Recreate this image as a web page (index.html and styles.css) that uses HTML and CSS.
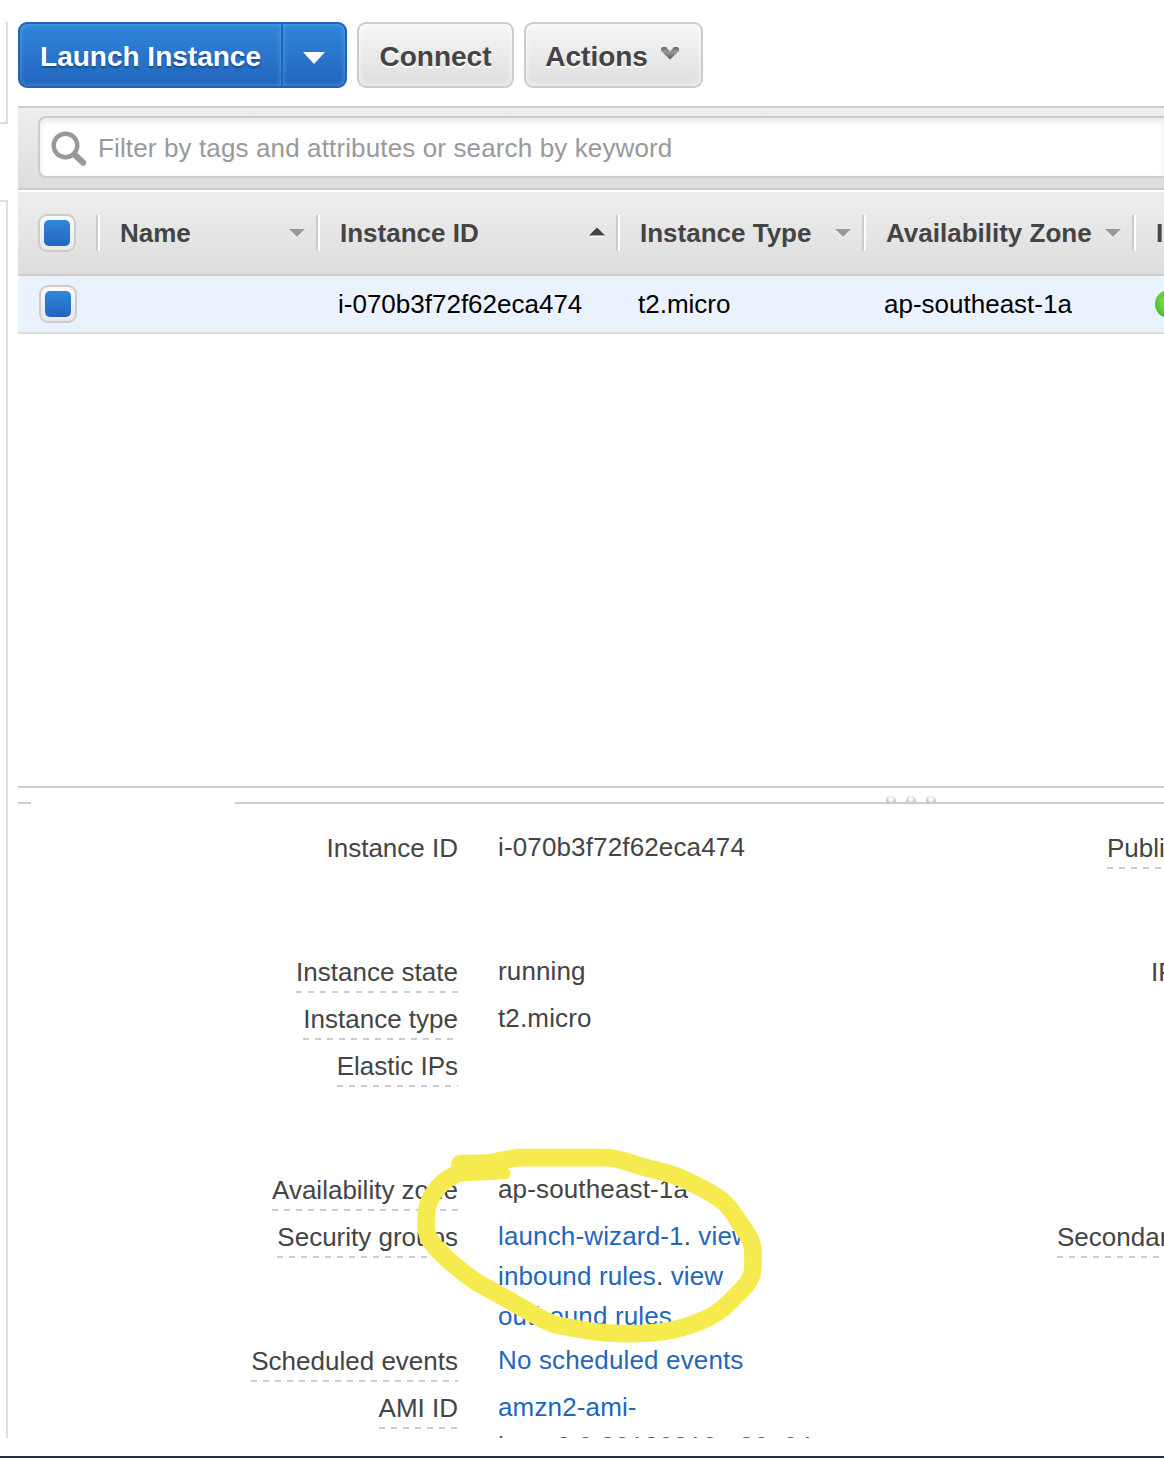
FILE: index.html
```html
<!DOCTYPE html>
<html lang="en">
<head>
<meta charset="utf-8">
<title>EC2 Instances</title>
<link rel="stylesheet" href="styles.css">
</head>
<body>
<div class="page">
  <aside class="rail">
    <div class="rail-top"></div>
    <div class="rail-nav"></div>
  </aside>
  <main class="main">
    <div class="toolbar">
      <div class="btn-group">
        <button class="btn btn-primary launch">Launch Instance</button>
        <button class="btn btn-primary launch-menu" aria-label="Launch options">
          <svg width="24" height="14" viewBox="0 0 24 14"><path d="M1 1H23L12 13Z" fill="#fff"/></svg>
        </button>
      </div>
      <button class="btn connect">Connect</button>
      <button class="btn actions">Actions
        <svg width="20" height="14" viewBox="0 0 20 14">
          <defs><linearGradient id="chev" x2="0" y2="1"><stop offset="0" stop-color="#666"/><stop offset=".4" stop-color="#999"/><stop offset="1" stop-color="#555"/></linearGradient></defs>
          <path d="M1 2L3 1H6L10 5.500L14 1H17L19 2V5L10 13.500L1 5Z" fill="url(#chev)"/>
        </svg>
      </button>
    </div>
    <div class="filter-bar">
      <div class="filter">
        <svg class="search" width="36" height="36" viewBox="0 0 36 36" fill="none" stroke="#999">
          <circle cx="14.500" cy="14.500" r="11.800" stroke-width="4.400"/>
          <path d="M23.500 23.500L32 31.500" stroke-width="6.500" stroke-linecap="round"/>
        </svg>
        <span>Filter by tags and attributes or search by keyword</span>
      </div>
    </div>
    <div class="grid head">
      <div class="check-cell"><span class="check"></span></div>
      <div class="th"><span>Name</span><svg class="sort" width="16" height="10" viewBox="0 0 16 10"><path d="M1 3H15L8 10Z" fill="#fff"/><path d="M0 1H16L8 9Z" fill="#999"/></svg></div>
      <div class="th"><span>Instance ID</span><svg class="sort up" width="16" height="12" viewBox="0 0 16 12"><path d="M1 8H15V10H1Z" fill="#fff"/><path d="M0 8.500H16L8 .5Z" fill="#444"/></svg></div>
      <div class="th"><span>Instance Type</span><svg class="sort" width="16" height="10" viewBox="0 0 16 10"><path d="M1 3H15L8 10Z" fill="#fff"/><path d="M0 1H16L8 9Z" fill="#999"/></svg></div>
      <div class="th"><span>Availability Zone</span><svg class="sort" width="16" height="10" viewBox="0 0 16 10"><path d="M1 3H15L8 10Z" fill="#fff"/><path d="M0 1H16L8 9Z" fill="#999"/></svg></div>
      <div class="th"><span>Instance State</span></div>
    </div>
    <div class="grid row">
      <div class="check-cell"><span class="check"></span></div>
      <div class="td"></div>
      <div class="td">i-070b3f72f62eca474</div>
      <div class="td">t2.micro</div>
      <div class="td">ap-southeast-1a</div>
      <div class="td state"><span class="dot"></span></div>
    </div>
    <div class="empty"></div>
    <div class="splitter"><span class="grip"></span><span class="grip"></span><span class="grip"></span></div>
    <div class="tabline"><span class="line-start"></span><span class="line-rest"></span></div>
    <div class="details">
      <dl class="col">
        <dt><span class="plain">Instance ID</span></dt><dd>i-070b3f72f62eca474</dd>
        <dt><span>Instance state</span></dt><dd>running</dd>
        <dt><span>Instance type</span></dt><dd>t2.micro</dd>
        <dt><span>Elastic IPs</span></dt><dd></dd>
        <dt><span>Availability zone</span></dt><dd>ap-southeast-1a</dd>
        <dt><span>Security groups</span></dt><dd><a>launch-wizard-1</a>. <a>view<br>inbound rules</a>. <a>view<br>outbound rules</a></dd>
        <dt><span>Scheduled events</span></dt><dd><a>No scheduled events</a></dd>
        <dt><span>AMI ID</span></dt><dd><a>amzn2-ami-</a><a class="ami-rest">hvm-2.0.20180810-x86_64-</a></dd>
      </dl>
      <div class="col-right">
        <div class="r-dns"><span>Public DNS (IPv4)</span></div>
        <div class="r-ip"><span class="plain">IPv6 IPs</span></div>
        <div class="r-sec"><span>Secondary private IPs</span></div>
      </div>
    </div>
  </main>
</div>
<svg class="marker" width="400" height="230" viewBox="0 0 1200 690" fill="none" stroke="#f5ea4e" stroke-linecap="round" stroke-linejoin="round">
  <path stroke-width="36" d="M240 120L374 130"/>
  <path stroke-width="53" d="M350 123L240 128C190 145 150 190 140 240C135 290 136 320 165 350C200 390 245 425 290 457L350 490L470 558C500 575 520 584 540 587C610 600 660 611 740 611C850 612 920 595 985 563C1030 540 1050 515 1090 475C1122 440 1119 420 1119 370C1119 330 1100 310 1078 277C1055 240 1040 220 1010 200C970 175 940 162 920 152C880 130 840 125 780 108C740 95 710 83 680 83H420C380 85 350 99 310 100L240 101"/>
</svg>
</body>
</html>
```
FILE: styles.css
```css
* { box-sizing: border-box; }

body {
  margin: 0;
  background: #fff;
  color: #444;
  font: 26px/40px "Liberation Sans", Arial, sans-serif;
}

.page {
  display: flex;
  gap: 10px;
  width: 1164px;
  height: 1458px;
  padding-bottom: 18px;
  border-bottom: 2px solid #232f3e;
  overflow: hidden;
}

.rail {
  flex: 0 0 8px;
  display: flex;
  flex-direction: column;
  gap: 76px;
  padding-top: 22px;
}
.rail-top { height: 102px; border: solid #ddd; border-width: 0 2px 2px 0; }
.rail-nav { flex: 1; border: solid #ddd; border-width: 2px 2px 0 0; }

.main {
  flex: 1;
  min-width: 0;
  display: flex;
  flex-direction: column;
  overflow: hidden;
}

.toolbar { display: flex; gap: 10px; padding: 22px 0 18px; }
.btn-group { display: flex; }
.btn {
  height: 66px;
  padding: 3px 0 0;
  border: 2px solid #ccc;
  border-radius: 9px;
  background: linear-gradient(#f6f6f6, #dedede);
  box-shadow: inset 0 0 6px rgba(255, 255, 255, .8);
  color: #444;
  font: bold 28px "Liberation Sans", Arial, sans-serif;
  text-shadow: 0 2px 0 #fff;
  white-space: nowrap;
}
.btn-primary {
  border-color: #1f62b8;
  background: linear-gradient(#3186dd, #2265bd);
  box-shadow: inset 0 0 5px rgba(120, 190, 235, .6);
  color: #fff;
  text-shadow: 0 2px 2px #174a8b;
}
.launch { width: 265px; border-radius: 9px 0 0 9px; }
.launch-menu { width: 66px; margin-left: -2px; padding: 1px 0 0; border-radius: 0 9px 9px 0; }
.connect { width: 157px; }
.actions { width: 179px; }
.actions svg { margin: 0 2px 0 4px; vertical-align: 6px; }

.filter-bar {
  height: 84px;
  padding: 8px 0 0 20px;
  border: solid #ccc;
  border-width: 2px 0;
  background: linear-gradient(#eee, #ddd);
}
.filter {
  display: flex;
  align-items: center;
  gap: 11px;
  height: 62px;
  padding: 3px 0 0 11px;
  border: 2px solid #ccc;
  border-right: 0;
  border-radius: 8px 0 0 8px;
  background: #fff;
  box-shadow: inset 0 3px 6px #e8e8e8;
  color: #999;
  letter-spacing: .13px;
}
.filter span { margin-bottom: 2px; }

.grid {
  display: grid;
  grid-template-columns: 78px 220px 300px 246px 270px 200px;
}
.head {
  height: 86px;
  border-top: 2px solid #fff;
  border-bottom: 2px solid #ccc;
  background: linear-gradient(#eee, #ddd);
  font-weight: bold;
}
.check-cell { display: flex; align-items: center; padding-left: 20px; }
.check {
  width: 38px;
  height: 38px;
  padding: 4px;
  border: 2px solid #ccc;
  border-radius: 9px;
  background: linear-gradient(#fafafa, #e8e8e8);
}
.check::before {
  content: "";
  display: block;
  width: 26px;
  height: 26px;
  border-radius: 5px;
  background: linear-gradient(#3186dd, #2265bd);
}
.th {
  align-self: center;
  display: flex;
  align-items: center;
  justify-content: space-between;
  height: 36px;
  padding: 0 11px 0 20px;
  border-left: 2px solid #ccc;
  box-shadow: inset 2px 0 #fff;
  white-space: nowrap;
}
.th span { padding-left: 2px; }

.row {
  height: 58px;
  border-bottom: 2px solid #ddd;
  background: #eaf2fe;
  color: #000;
}
.row .check-cell { padding-left: 21px; }
.td { align-self: center; padding-left: 22px; }
.state { display: flex; padding-left: 23px; }
.dot {
  width: 28px;
  height: 28px;
  border-radius: 50%;
  background: radial-gradient(circle at 50% 40%, #8be85a, #4fc52c 65%, #49ad2a);
}

.empty { height: 452px; }
.splitter {
  display: flex;
  gap: 10px;
  height: 16px;
  padding: 8px 0 0 868px;
  border-top: 2px solid #ccc;
  overflow: hidden;
}
.grip {
  flex: 0 0 10px;
  height: 10px;
  border-radius: 50%;
  background: radial-gradient(circle at 50% 30%, #fff 15%, #ccc 45%);
}
.tabline { display: flex; gap: 204px; height: 2px; }
.line-start { width: 13px; background: #ccc; }
.line-rest { flex: 1; background: #ccc; }

.details {
  flex: 1;
  min-height: 0;
  display: grid;
  grid-template-columns: 1039px 300px;
  padding-top: 24px;
  overflow: hidden;
}
.col {
  display: grid;
  grid-template-columns: 440px 1fr;
  grid-template-rows: 124px 47px 47px 124px 47px 124px 47px 47px;
  column-gap: 40px;
  margin: 0;
}
dt { text-align: right; }
dd { margin: -1px 0 0; white-space: nowrap; letter-spacing: .14px; }
a { color: #1f66bd; }
.ami-rest { display: block; margin-top: -1px; }
dt span, .col-right span {
  display: inline-block;
  height: 41px;
  background: linear-gradient(90deg, #ccc 50%, transparent 50%) 0 100% / 12px 2px repeat-x;
  white-space: nowrap;
}
dt .plain, .col-right .plain { background: none; }
.col-right {
  display: grid;
  grid-template-rows: 124px 265px 47px;
}
.r-dns { padding-left: 50px; }
.r-ip { padding-left: 94px; }

.marker { position: absolute; left: 380px; top: 1130px; }
```
